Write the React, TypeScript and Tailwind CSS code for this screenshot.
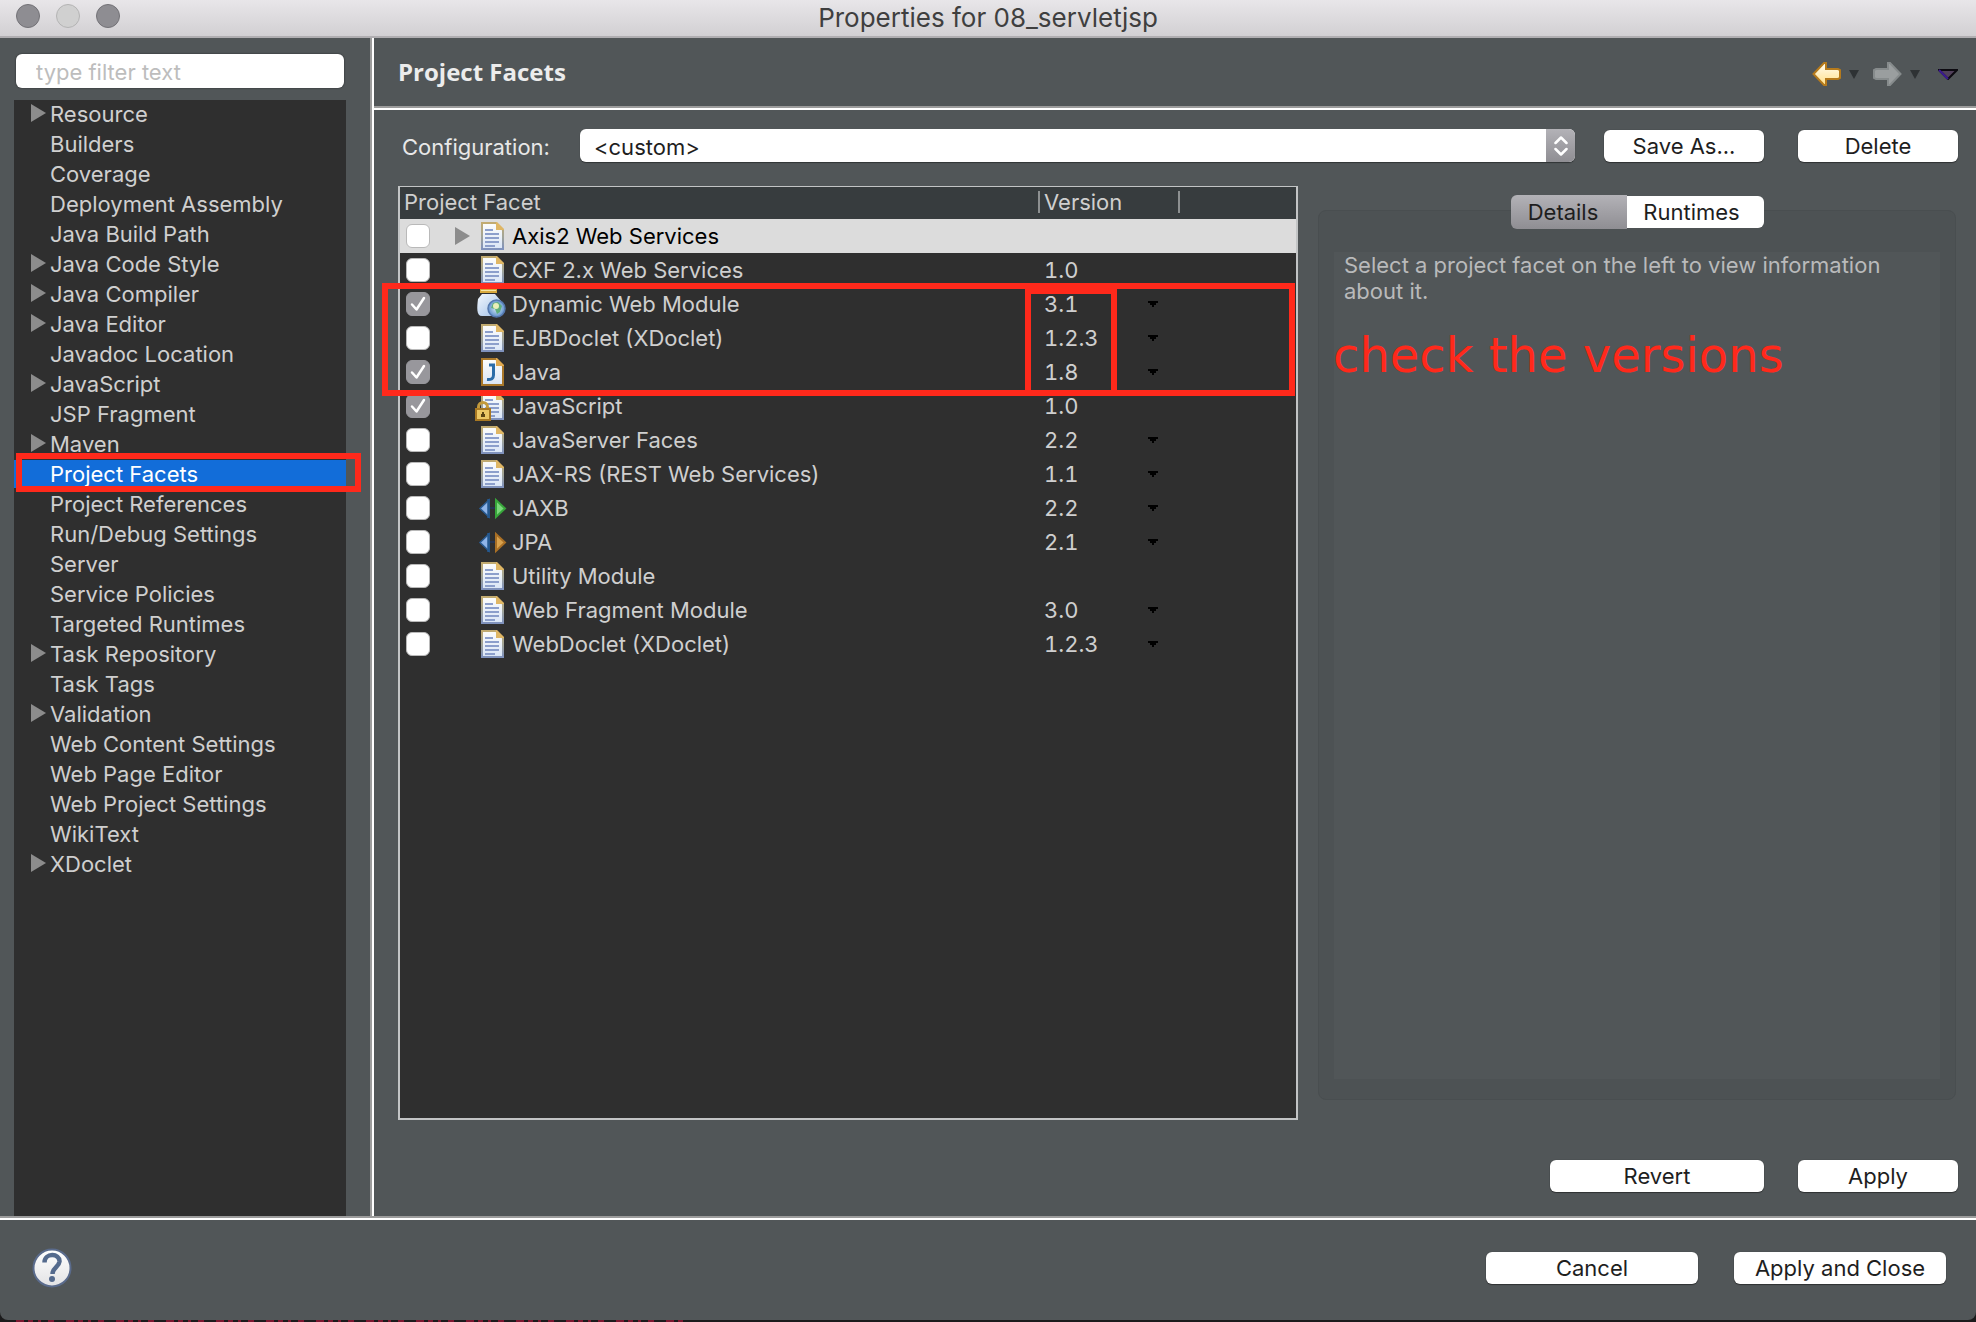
import React from "react";

const TREE: { name: string; children?: boolean; selected?: boolean }[] = [
  { name: "Resource", children: true },
  { name: "Builders" },
  { name: "Coverage" },
  { name: "Deployment Assembly" },
  { name: "Java Build Path" },
  { name: "Java Code Style", children: true },
  { name: "Java Compiler", children: true },
  { name: "Java Editor", children: true },
  { name: "Javadoc Location" },
  { name: "JavaScript", children: true },
  { name: "JSP Fragment" },
  { name: "Maven", children: true },
  { name: "Project Facets", selected: true },
  { name: "Project References" },
  { name: "Run/Debug Settings" },
  { name: "Server" },
  { name: "Service Policies" },
  { name: "Targeted Runtimes" },
  { name: "Task Repository", children: true },
  { name: "Task Tags" },
  { name: "Validation", children: true },
  { name: "Web Content Settings" },
  { name: "Web Page Editor" },
  { name: "Web Project Settings" },
  { name: "WikiText" },
  { name: "XDoclet", children: true },
];

type IconKind = "doc" | "web" | "java" | "locked" | "jaxb" | "jpa";

const FACETS: {
  name: string;
  icon: IconKind;
  version?: string;
  menu?: boolean;
  checked?: boolean;
  children?: boolean;
}[] = [
  { name: "Axis2 Web Services", icon: "doc", children: true },
  { name: "CXF 2.x Web Services", icon: "doc", version: "1.0" },
  { name: "Dynamic Web Module", icon: "web", version: "3.1", menu: true, checked: true },
  { name: "EJBDoclet (XDoclet)", icon: "doc", version: "1.2.3", menu: true },
  { name: "Java", icon: "java", version: "1.8", menu: true, checked: true },
  { name: "JavaScript", icon: "locked", version: "1.0", checked: true },
  { name: "JavaServer Faces", icon: "doc", version: "2.2", menu: true },
  { name: "JAX-RS (REST Web Services)", icon: "doc", version: "1.1", menu: true },
  { name: "JAXB", icon: "jaxb", version: "2.2", menu: true },
  { name: "JPA", icon: "jpa", version: "2.1", menu: true },
  { name: "Utility Module", icon: "doc" },
  { name: "Web Fragment Module", icon: "doc", version: "3.0", menu: true },
  { name: "WebDoclet (XDoclet)", icon: "doc", version: "1.2.3", menu: true },
];

function Disclosure() {
  return (
    <svg width="15" height="18" viewBox="0 0 15 18" aria-hidden="true">
      <path d="M0 0L15 9L0 18Z" fill="#8c8c8c" />
    </svg>
  );
}

function Sheet() {
  return (
    <>
      <path d="M7 2H21L28 9V28H7Z" fill="url(#sheet)" stroke="url(#sheetEdge)" strokeWidth="2" />
      <path d="M21 1V9H29V8L22 1Z" fill="#dfb664" />
      <path d="M10 9H18M10 13H24M10 17H24M10 21H24M10 25H20" stroke="#8c9fcb" strokeWidth="2" />
    </>
  );
}

function FacetIcon({ kind }: { kind: IconKind }) {
  return (
    <svg width="32" height="30" viewBox="0 0 32 30" className="shrink-0" aria-hidden="true">
      {kind === "doc" && <Sheet />}
      {kind === "java" && (
        <>
          <path d="M7 2H21L28 9V28H7Z" fill="url(#sheet)" stroke="#a9782a" strokeWidth="2" />
          <path d="M21 1V9H29V8L22 1Z" fill="#dfa94f" />
          <path d="M14 8H18.500V18C18.500 21.500 16.500 22.800 12 22.500" fill="none" stroke="#2b6ca8" strokeWidth="3" />
        </>
      )}
      {kind === "locked" && (
        <>
          <Sheet />
          <path d="M3.500 19V16C3.500 10 12.500 10 12.500 16V19" fill="none" stroke="#c39a3c" strokeWidth="3" />
          <rect x="1" y="18" width="14" height="11" fill="#ecc765" stroke="#a87822" strokeWidth="2" />
          <path d="M7 21H9V23H10V26H6V23H7Z" fill="#5c4515" />
        </>
      )}
      {kind === "web" && (
        <>
          <path d="M5 0H22V4H5Z" fill="#d9a93c" />
          <path d="M6 1.500H21" stroke="#f6e3a2" strokeWidth="1" />
          <path d="M7 5H20L26 12C28 20 26 26 20 27H8C1 28 2 18 3 10Z" fill="url(#jar)" />
          <circle cx="21.500" cy="19.500" r="8.500" fill="url(#globe)" stroke="#5578ad" strokeWidth="1.500" />
          <path d="M18 14L23 13L27 17L25 23L22 25L20 20L16 19Z" fill="#5fae7c" />
          <circle cx="21" cy="17" r="3" fill="#e9efb8" />
        </>
      )}
      {(kind === "jaxb" || kind === "jpa") && (
        <>
          <path d="M14 15H22" stroke="#253450" strokeWidth="2" />
          <path d="M14 7V24L5 15.500Z" fill="#8fb4e8" stroke="#2b5c92" strokeWidth="1.500" />
          <path d="M13.500 6V25" stroke="#24588f" strokeWidth="2.500" />
          <path
            d="M21 7V24L30 15.500Z"
            fill={kind === "jaxb" ? "#7bd67b" : "#d9a24e"}
            stroke={kind === "jaxb" ? "#37a53a" : "#a96f25"}
            strokeWidth="2"
          />
        </>
      )}
    </svg>
  );
}

function SharedGradients() {
  return (
    <svg width="0" height="0" className="absolute" aria-hidden="true">
      <defs>
        <linearGradient id="sheet" x1="0" y1="0" x2="0" y2="1">
          <stop offset="0" stopColor="#fdfdfb" />
          <stop offset="1" stopColor="#d9e5f6" />
        </linearGradient>
        <linearGradient id="sheetEdge" x1="0" y1="0" x2="0" y2="1">
          <stop offset="0" stopColor="#c2ab70" />
          <stop offset="0.500" stopColor="#a3a596" />
          <stop offset="1" stopColor="#7f92bd" />
        </linearGradient>
        <linearGradient id="jar" x1="0" y1="0" x2="1" y2="1">
          <stop offset="0" stopColor="#f2f7fd" />
          <stop offset="1" stopColor="#9fbfe6" />
        </linearGradient>
        <radialGradient id="globe">
          <stop offset="0" stopColor="#d9ecf5" />
          <stop offset="1" stopColor="#5f8fcb" />
        </radialGradient>
        <linearGradient id="backArrow" x1="0" y1="0" x2="0" y2="1">
          <stop offset="0" stopColor="#fffdf2" />
          <stop offset="1" stopColor="#ffe08a" />
        </linearGradient>
        <linearGradient id="helpFill" x1="0" y1="0" x2="0" y2="1">
          <stop offset="0" stopColor="#ffffff" />
          <stop offset="1" stopColor="#e2e2e4" />
        </linearGradient>
      </defs>
    </svg>
  );
}

function PushButton({ children, className }: { children: React.ReactNode; className: string }) {
  return (
    <button
      type="button"
      className={`h-8 rounded-md bg-white text-[22px] leading-8 text-[#1e1e1e] shadow-[0_1px_1px_rgba(0,0,0,0.4),0_0_1px_rgba(0,0,0,0.4)] ${className}`}
    >
      {children}
    </button>
  );
}

function MenuArrow() {
  return (
    <svg width="10" height="9" viewBox="0 0 10 9" aria-hidden="true">
      <path d="M0 0H10L5 9Z" fill="#2e3234" />
    </svg>
  );
}

function Sidebar() {
  return (
    <aside className="flex w-[374px] shrink-0 flex-col border-r-2 border-white">
      <div className="flex flex-1 flex-col border-r-2 border-[#9c9c9c] pr-6 pl-[14px] pt-4">
        <input
          type="text"
          aria-label="Filter"
          placeholder="type filter text"
          className="mx-[2px] mb-3 h-[34px] rounded-md bg-white px-5 pt-[2px] text-[22px] text-black shadow-[0_0_2px_rgba(0,0,0,0.6)] placeholder:text-[#bdbdbd]"
        />
        <nav className="relative flex-1 bg-[#2f2f2f]">
          <ul className="flex flex-col gap-[2px]">
            {TREE.map((n) => (
              <li key={n.name}>
                <button
                  type="button"
                  className={`flex h-7 w-full items-center pl-[17px] text-left text-[22px] leading-7 ${
                    n.selected ? "bg-[#126dd9] text-white" : "text-[#cfcfcf]"
                  }`}
                >
                  <span className="flex w-[19px] shrink-0 pb-[2px]">{n.children && <Disclosure />}</span>
                  {n.name}
                </button>
              </li>
            ))}
          </ul>
          <div className="pointer-events-none absolute top-[353px] -right-[15px] left-[2px] h-[39px] border-6 border-[#ff291b]" />
        </nav>
      </div>
    </aside>
  );
}

function FacetTable() {
  return (
    <div className="relative border-x-2 border-t border-b-2 border-[#c2c4c5] bg-[#2f2f2f]">
      <table className="w-full table-fixed border-collapse text-[22px] leading-[34px] text-[#cfcfcf]">
        <thead>
          <tr className="h-8 bg-[#373c3e] leading-[30px]">
            <th className="p-0 pb-[2px] pl-1 text-left font-normal">Project Facet</th>
            <th className="w-[140px] p-0 pb-[2px] text-left font-normal">
              <div className="flex items-center gap-1">
                <span className="h-[22px] w-[2px] bg-[#8d9091]" />
                Version
              </div>
            </th>
            <th className="w-[118px] p-0 pb-[2px]" aria-label="Version menu">
              <div className="h-[22px] w-[2px] bg-[#8d9091]" />
            </th>
          </tr>
        </thead>
        <tbody>
          {FACETS.map((f, i) => (
            <tr key={f.name} className={i === 0 ? "h-[34px] bg-[#dcdcdc] text-black" : "h-[34px]"}>
              <td className="p-0">
                <div className="flex h-[34px] items-center">
                  <label className="flex items-center">
                    <span className="relative ml-[6px] mr-[25px] flex">
                      <input
                        type="checkbox"
                        defaultChecked={f.checked}
                        className="peer h-6 w-6 appearance-none rounded-md border border-[#b9b9b9] bg-white checked:border-[#98979c] checked:bg-[#98979c]"
                      />
                      <svg
                        width="24"
                        height="24"
                        viewBox="0 0 24 24"
                        className="pointer-events-none absolute inset-0 opacity-0 peer-checked:opacity-100"
                        aria-hidden="true"
                      >
                        <path d="M6 12.500L10.500 17.500L18 6" fill="none" stroke="#fff" strokeWidth="2.500" strokeLinecap="round" strokeLinejoin="round" />
                      </svg>
                    </span>
                    <span className="flex w-5 shrink-0">{f.children && <Disclosure />}</span>
                    <FacetIcon kind={f.icon} />
                    <span className="pl-[5px]">{f.name}</span>
                  </label>
                </div>
              </td>
              <td className="p-0 pl-[6px]">
                <div className="flex items-center tabular-nums">
                  <span className="w-[104px]">{f.version}</span>
                  {f.menu && (
                    <button type="button" aria-label={`Choose version of ${f.name}`}>
                      <svg width="10" height="6" viewBox="0 0 10 6" aria-hidden="true">
                        <path d="M0 0H10V2H8V4H6V6H4V4H2V2H0Z" fill="#000" />
                      </svg>
                    </button>
                  )}
                </div>
              </td>
              <td className="p-0" />
            </tr>
          ))}
        </tbody>
      </table>
      <div className="pointer-events-none absolute top-24 right-[1px] -left-[18px] h-[113px] border-6 border-[#ff291b]" />
      <div className="pointer-events-none absolute top-[101px] right-[179px] h-[108px] w-[92px] border-6 border-[#ff291b]" />
    </div>
  );
}

function DetailsPanel() {
  return (
    <section className="relative mt-6 mb-5 flex flex-col rounded-lg border border-[#494e50] bg-[#4d5254] px-[15px] pt-[41px] pb-5">
      <div role="tablist" className="absolute -top-4 right-[191px] flex h-[34px] text-[22px] leading-[34px] text-[#1e1e1e]">
        <button
          type="button"
          role="tab"
          aria-selected="true"
          className="w-[116px] rounded-l-md bg-linear-to-b from-[#b3b2b7] to-[#8f8e93] pr-3"
        >
          Details
        </button>
        <button type="button" role="tab" aria-selected="false" className="my-px w-[137px] rounded-r-md bg-white pr-2 leading-8">
          Runtimes
        </button>
      </div>
      <div className="flex-1 bg-[#515658] px-[10px] text-[22px] leading-[26px] text-[#b9babb]">
        <p>Select a project facet on the left to view information about it.</p>
      </div>
      <p className="absolute top-28 left-[14px] font-['DejaVu_Sans',sans-serif] text-5xl leading-[64px] whitespace-nowrap text-[#ff291b]">
        check the versions
      </p>
    </section>
  );
}

function Main() {
  return (
    <main className="flex min-w-0 flex-1 flex-col">
      <header className="flex h-[70px] shrink-0 items-center border-b-2 border-[#9c9c9c] pr-[18px] pl-6">
        <h1 className="flex-1 font-['Open_Sans',sans-serif] text-2xl leading-8 font-bold text-[#ececec]">Project Facets</h1>
        <div className="flex items-center pt-1">
          <button type="button" aria-label="Back">
            <svg width="29" height="24" viewBox="0 0 29 24" aria-hidden="true">
              <path d="M1.500 12L12 1H14V7H26L28 8V16L26 17H14V23H12Z" fill="url(#backArrow)" stroke="#b57a1c" strokeWidth="2" />
            </svg>
          </button>
          <button type="button" aria-label="Back history" className="ml-2">
            <MenuArrow />
          </button>
          <button type="button" aria-label="Forward" disabled className="ml-[14px]">
            <svg width="29" height="24" viewBox="0 0 29 24" aria-hidden="true">
              <path d="M27.500 12L17 1H15V7H3L1 8V16L3 17H15V23H17Z" fill="#9a9e9f" stroke="#868b8c" strokeWidth="2" />
            </svg>
          </button>
          <button type="button" aria-label="Forward history" className="ml-2">
            <MenuArrow />
          </button>
          <button type="button" aria-label="View menu" className="ml-[18px]">
            <svg width="20" height="11" viewBox="0 0 20 11" aria-hidden="true">
              <path d="M1 1H19L10 10Z" fill="#51405a" stroke="#0c0a10" strokeWidth="2" />
              <path d="M1 1L10 10" stroke="#3d1a94" strokeWidth="2" />
            </svg>
          </button>
        </div>
      </header>
      <div className="flex flex-1 flex-col border-t-2 border-white pr-[18px] pl-6 pt-[19px]">
        <div className="mb-6 flex items-center">
          <label htmlFor="configuration" className="w-[182px] shrink-0 pt-[2px] pl-1 text-[22px] leading-[30px] text-[#e8e8e8]">
            Configuration:
          </label>
          <div className="relative flex flex-1">
            <select
              id="configuration"
              className="h-[33px] w-full appearance-none rounded-md bg-white px-[14px] pt-[2px] text-[22px] text-[#1e1e1e] shadow-[0_1px_1px_rgba(0,0,0,0.4)]"
            >
              <option>&lt;custom&gt;</option>
            </select>
            <div className="pointer-events-none absolute inset-y-0 right-0 flex w-[29px] items-center justify-center rounded-r-md bg-linear-to-b from-[#b3b2b7] to-[#8f8e93]">
              <svg width="14" height="20" viewBox="0 0 14 20" aria-hidden="true">
                <path d="M1.500 7L7 1.500L12.500 7M1.500 13L7 18.500L12.500 13" fill="none" stroke="#fff" strokeWidth="2.500" strokeLinecap="round" strokeLinejoin="round" />
              </svg>
            </div>
          </div>
          <PushButton className="ml-[29px] w-40">Save As...</PushButton>
          <PushButton className="ml-[34px] w-40">Delete</PushButton>
        </div>
        <div className="mr-[2px] grid flex-1 grid-cols-[900fr_638fr] gap-5">
          <FacetTable />
          <DetailsPanel />
        </div>
        <div className="mt-10 mb-6 flex justify-end gap-[34px]">
          <PushButton className="w-[214px]">Revert</PushButton>
          <PushButton className="w-40">Apply</PushButton>
        </div>
      </div>
    </main>
  );
}

export default function App() {
  return (
    <div className="flex min-h-screen flex-col bg-[#1b1b1c] font-['Inter',sans-serif]">
      <SharedGradients />
      <div className="flex flex-1 flex-col overflow-hidden rounded-b-lg bg-[#515658]">
        <div className="relative flex h-[38px] shrink-0 items-center justify-center border-b-2 border-[#b0aeb1] bg-linear-to-b from-[#e8e6e9] to-[#d2d0d3]">
          <div className="absolute top-1 left-4 flex gap-4">
            <button type="button" aria-label="Close" className="h-6 w-6 rounded-full border border-[#737277] bg-[#8e8d92]" />
            <button type="button" aria-label="Minimize" className="h-6 w-6 rounded-full border border-[#b4b4b4] bg-[#d0d0d0]" />
            <button type="button" aria-label="Zoom" className="h-6 w-6 rounded-full border border-[#737277] bg-[#8e8d92]" />
          </div>
          <span className="text-[26px] leading-8 text-[#3f3f3f]">Properties for 08_servletjsp</span>
        </div>
        <div className="flex flex-1">
          <Sidebar />
          <Main />
        </div>
        <footer className="border-t-2 border-[#9c9c9c]">
          <div className="flex h-[102px] items-center gap-9 border-t-2 border-white pr-[30px] pb-1 pl-8">
            <button type="button" aria-label="Help" className="mr-auto">
              <svg width="40" height="40" viewBox="0 0 40 40" aria-hidden="true">
                <circle cx="20" cy="20" r="18.500" fill="url(#helpFill)" stroke="#5a6b8c" strokeWidth="2" />
                <path d="M12.500 14.500C12.500 4.500 28 5 27.500 13.500C27 19 20.500 19.500 20.500 26" fill="none" stroke="#546a8d" strokeWidth="4.500" />
                <circle cx="20" cy="31" r="3" fill="#546a8d" />
              </svg>
            </button>
            <PushButton className="w-[212px]">Cancel</PushButton>
            <PushButton className="w-[212px]">Apply and Close</PushButton>
          </div>
        </footer>
      </div>
      <svg height="2" className="w-full shrink-0" aria-hidden="true">
        <path d="M16 1H688" stroke="#7c1730" strokeWidth="2" strokeDasharray="8 4 5 5 3 7 6 12" />
      </svg>
    </div>
  );
}
